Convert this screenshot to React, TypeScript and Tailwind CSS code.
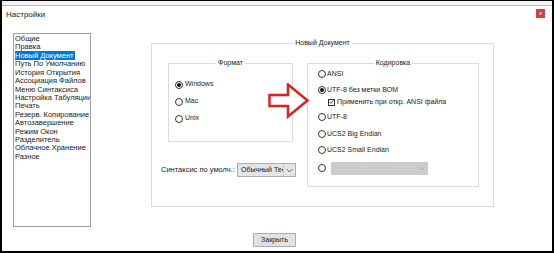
import React from "react";

const items = [
  "Общие",
  "Правка",
  "Новый Документ",
  "Путь По Умолчанию",
  "История Открытия",
  "Ассоциация Файлов",
  "Меню Синтаксиса",
  "Настройка Табуляции",
  "Печать",
  "Резерв. Копирование",
  "Автозавершение",
  "Режим Окон",
  "Разделитель",
  "Облачное Хранение",
  "Разное",
];

const Radio = ({ checked = false }: { checked?: boolean }) => (
  <span className="flex items-center justify-center w-[8px] h-[8px] rounded-full border border-[#333] bg-white shrink-0">
    {checked && <span className="w-[4px] h-[4px] rounded-full bg-[#111]" />}
  </span>
);

const Chevron = ({ color = "#555" }: { color?: string }) => (
  <svg width="7" height="5" viewBox="0 0 7 5">
    <path d="M0.5 1 L3.5 4 L6.5 1" fill="none" stroke={color} strokeWidth="0.9" />
  </svg>
);

export default function App() {
  return (
    <div
      className="w-[554px] h-[253px] bg-black pl-[2px] pr-[2px] pt-[1px] pb-[2px] text-[7px] text-[#1a1a1a]"
      style={{ fontFamily: '"Liberation Sans", Arial, sans-serif' }}
    >
      <div className="h-full bg-white flex flex-col">
        <div className="h-[4px] shrink-0 bg-[#f3f3f3]" />
        <div className="h-[1px] shrink-0 bg-[#9cc3e5]" />
        {/* title bar */}
        <div className="h-[22px] shrink-0 flex items-start justify-between pl-[4px] pr-[7px] pt-[3px]">
          <span className="text-[8px] leading-[11px]">Настройки</span>
          <span className="mt-[0px] w-[9px] h-[9px] bg-[#c94545] text-white text-[6px] leading-[9px] text-center">x</span>
        </div>
        {/* body */}
        <div className="flex shrink-0 pl-[11px] pt-[5px]">
          <div className="w-[78px] h-[194px] border border-[#a0a0a0] pt-[1px] pl-[1px] overflow-hidden text-[7.5px]">
            {items.map((it, i) => (
              <div key={it} className="h-[8.43px] leading-[8.43px] whitespace-nowrap">
                <span className={i === 2 ? "bg-[#0078d7] text-white pr-[1px]" : ""}>{it}</span>
              </div>
            ))}
          </div>
          <fieldset className="relative ml-[60px] mt-[5px] w-[343px] h-[169px] border border-[#dcdcdc] flex">
            <legend className="mx-auto px-[2px] leading-[10px]">Новый Документ</legend>
            <div className="flex">
              <div className="ml-[9px] flex flex-col">
                <fieldset className="ml-[7px] mt-[10px] w-[125px] h-[84px] border border-[#dcdcdc]">
                  <legend className="mx-auto px-[2px] leading-[10px]">Формат</legend>
                  <div className="flex flex-col pl-[6px] pt-[8px]">
                    <div className="h-[17px] flex items-center gap-[2px]">
                      <Radio checked />
                      <span>Windows</span>
                    </div>
                    <div className="h-[17px] flex items-center gap-[2px]">
                      <Radio />
                      <span>Mac</span>
                    </div>
                    <div className="h-[17px] flex items-center gap-[2px]">
                      <Radio />
                      <span>Unix</span>
                    </div>
                  </div>
                </fieldset>
                <div className="mt-[21px] flex items-center w-[135px] text-[7.5px]">
                  <span className="w-[76px] whitespace-nowrap">Синтаксис по умолч.:</span>
                  <div className="w-[59px] h-[14px] border border-[#adadad] bg-[#e5e5e5] flex items-center justify-between pl-[3px] pr-[2px]">
                    <span className="whitespace-nowrap overflow-hidden text-[7px]">Обычный Те•</span>
                    <span className="border-l border-[#c8c8c8] pl-[2px] h-full flex items-center">
                      <Chevron />
                    </span>
                  </div>
                </div>
              </div>
              <fieldset className="ml-[11px] mt-[10px] w-[172px] h-[129px] border border-[#dcdcdc]">
                <legend className="mx-auto px-[2px] leading-[10px]">Кодировка</legend>
                <div className="flex flex-col pl-[10px]">
                  <div className="h-[12px] flex items-center gap-[1px]">
                    <Radio />
                    <span>ANSI</span>
                  </div>
                  <div className="mt-[4px] h-[12px] flex items-center gap-[1px]">
                    <Radio checked />
                    <span>UTF-8 без метки BOM</span>
                  </div>
                  <div className="h-[12px] flex items-center gap-[2px] ml-[10px]">
                    <span className="w-[7px] h-[7px] border border-[#333] flex items-center justify-center">
                      <svg width="6" height="6" viewBox="0 0 6 6">
                        <path d="M0.8 3 L2.3 4.6 L5.3 1" fill="none" stroke="#111" strokeWidth="0.9" />
                      </svg>
                    </span>
                    <span>Применить при откр. ANSI файла</span>
                  </div>
                  <div className="mt-[3px] h-[12px] flex items-center gap-[1px]">
                    <Radio />
                    <span>UTF-8</span>
                  </div>
                  <div className="mt-[5px] h-[12px] flex items-center gap-[1px]">
                    <Radio />
                    <span>UCS2 Big Endian</span>
                  </div>
                  <div className="mt-[4px] h-[12px] flex items-center gap-[1px]">
                    <Radio />
                    <span>UCS2 Small Endian</span>
                  </div>
                  <div className="mt-[5px] h-[14px] flex items-center gap-[5px]">
                    <Radio />
                    <div className="w-[97px] h-[13px] bg-[#cccccc] flex items-center justify-end pr-[3px]">
                      <Chevron color="#aaa" />
                    </div>
                  </div>
                </div>
              </fieldset>
            </div>
            <svg className="absolute left-[116px] top-[35px]" width="42" height="36" viewBox="0 0 42 36">
              <polygon
                points="1.5,12 20,12 20,1.5 39.5,17.5 20,33.5 20,23 1.5,23"
                fill="white"
                stroke="#e0201b"
                strokeWidth="2.5"
                strokeLinejoin="miter"
              />
            </svg>
          </fieldset>
        </div>
        <div className="flex shrink-0 pl-[251px] mt-[6px]">
          <div className="w-[43px] h-[14px] border border-[#adadad] bg-[#e1e1e1] flex items-center justify-center">
            Закрыть
          </div>
        </div>
      </div>
    </div>
  );
}
